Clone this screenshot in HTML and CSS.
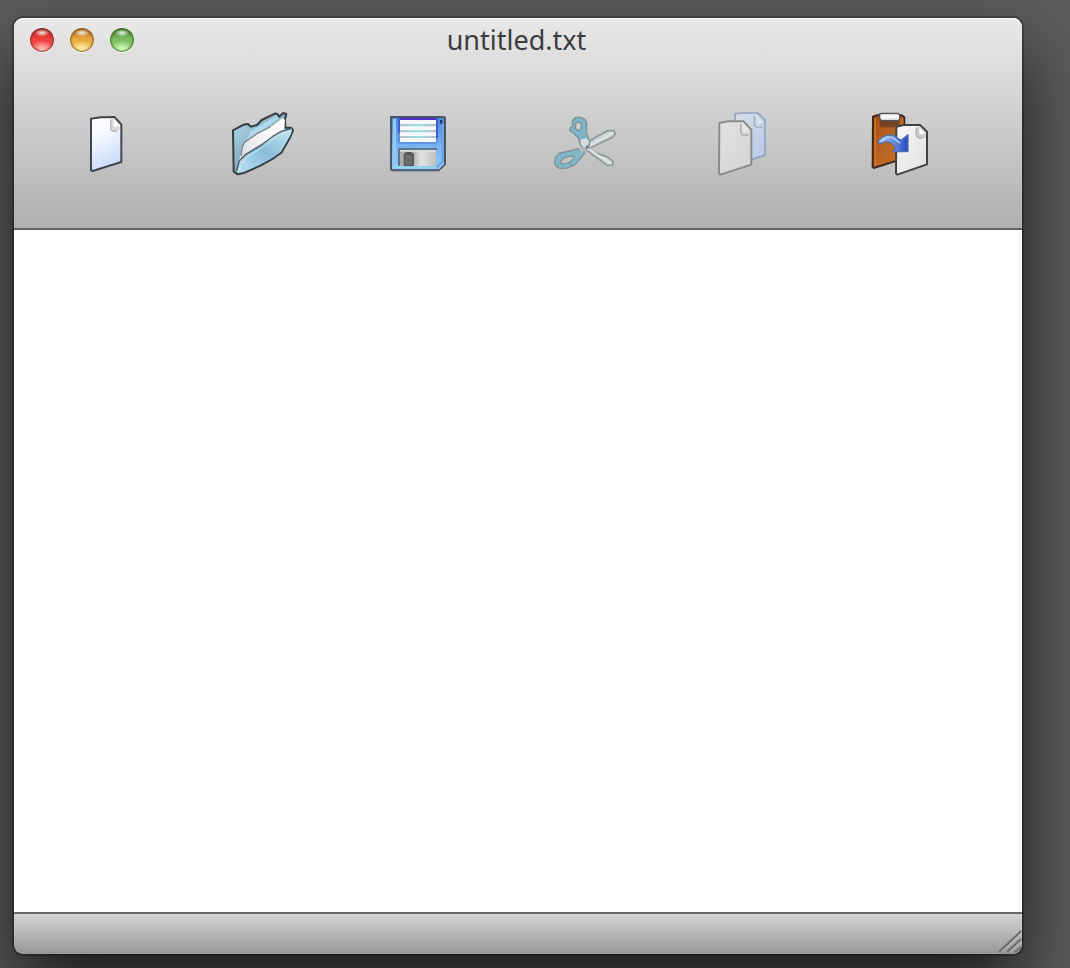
FILE: index.html
```html
<!DOCTYPE html>
<html lang="en">
<head>
<meta charset="utf-8">
<title>untitled.txt</title>
<link rel="stylesheet" href="styles.css">
</head>
<body>
<main class="window">
  <header class="window-head">
    <div class="titlebar">
      <div class="lights">
        <button class="light light-red" type="button" aria-label="Close"></button>
        <button class="light light-amber" type="button" aria-label="Minimize"></button>
        <button class="light light-green" type="button" aria-label="Zoom"></button>
      </div>
      <h1 class="title">untitled.txt</h1>
    </div>
    <nav class="toolbar" aria-label="Tools">
      <div class="group">
        <button class="tool" type="button" aria-label="New">
          <svg viewBox="-18 21 192 192">
            <defs><linearGradient id="page" x1="0" y1="0" x2="0.25" y2="1"><stop offset="0" stop-color="#fff"/><stop offset=".35" stop-color="#f7faff"/><stop offset="1" stop-color="#c9dcfb"/></linearGradient></defs>
            <path d="M33 41L62 37L103 36L124 58V171L38 198L33 196Z" fill="url(#page)" stroke="#42464c" stroke-width="6" stroke-linejoin="round"/>
            <path d="M91 40L101 39L118 58L119 77L96 77L91 73Z" fill="#dadada"/>
            <path d="M101 42L117 62L105 66L101 62Z" fill="#fff"/>
            <path d="M92 44V74L98 78H112" fill="none" stroke="#b5b8bd" stroke-width="4"/>
          </svg>
        </button>
        <button class="tool" type="button" aria-label="Open">
          <svg viewBox="24 30 192 192">
            <defs>
              <linearGradient id="back" x1="0" y1="0" x2="1" y2="1"><stop offset="0" stop-color="#b5e0f1"/><stop offset=".5" stop-color="#83aabd"/><stop offset="1" stop-color="#bcdbe8"/></linearGradient>
              <linearGradient id="front" x1="1" y1="0" x2="0" y2="1"><stop offset="0" stop-color="#c5e7f4"/><stop offset=".5" stop-color="#8abed8"/><stop offset="1" stop-color="#b9e2f2"/></linearGradient>
              <linearGradient id="sheet" x1="0" y1="1" x2="1" y2="0"><stop offset="0" stop-color="#d5d7dc"/><stop offset=".5" stop-color="#f3f3f4"/><stop offset="1" stop-color="#fff"/></linearGradient>
            </defs>
            <path d="M33 85L65 68L78 66L86 74L105 69L119 54L160 34L168 37L171 44L184 33L193 36L189 52L190 77L207 77L213 85L205 105L179 151L148 173L115 191L65 213L47 217L35 209Z" fill="url(#back)" stroke="#353d41" stroke-width="6" stroke-linejoin="round"/>
            <path d="M87 86L131 60L163 42L171 50L70 120Z" fill="#acd9eb"/>
            <path d="M52 174L60 135L70 119L103 94L146 75L183 47L189 54L186 88L71 160L53 189Z" fill="url(#sheet)"/>
            <path d="M57 162L61 134L70 119L105 95L145 75" fill="none" stroke="#7d858a" stroke-width="4"/>
            <path d="M72 161L119 133L152 109L176 91L210 80L207 96L188 129L177 149L151 168L112 189L66 209L46 213L49 191Z" fill="url(#front)"/>
            <path d="M44 207L51 178L70 158L119 128L151 104L178 88L208 80" fill="none" stroke="#4d5d65" stroke-width="4" stroke-linejoin="round"/>
            <path d="M48 207L61 185L74 165L121 137L151 114L176 97L205 85" fill="none" stroke="#c9eaf5" stroke-width="3"/>
          </svg>
        </button>
        <button class="tool" type="button" aria-label="Save">
          <svg viewBox="18 21 192 192">
            <defs>
              <linearGradient id="disk" x1="0" y1="0" x2="0" y2="1"><stop offset="0" stop-color="#4e87d7"/><stop offset=".55" stop-color="#77b4ef"/><stop offset="1" stop-color="#99c9f4"/></linearGradient>
              <linearGradient id="shutter"><stop offset="0" stop-color="#aaa"/><stop offset=".4" stop-color="#bbb"/><stop offset=".6" stop-color="#e3e3e3"/><stop offset="1" stop-color="#bebebe"/></linearGradient>
              <linearGradient id="stripe"><stop offset="0" stop-color="#b5bdcb"/><stop offset=".5" stop-color="#9ce4e7"/><stop offset="1" stop-color="#b5bdcb"/></linearGradient>
            </defs>
            <path d="M33 36H192L195 39V177L176 196H37L33 192Z" fill="url(#disk)" stroke="#4a5664" stroke-width="6" stroke-linejoin="round"/>
            <path d="M39 42V189H60V183H48V42Z" fill="#93c9f6"/>
            <path d="M185 56H192V174L174 191H168V183L185 170Z" fill="#68a4e5"/>
            <path d="M54 39H174V110L168 116H60L54 110Z" fill="#5a8fe0"/>
            <path d="M54 39H60V84H54ZM168 39H174V100H168Z" fill="#3c5fd0"/>
            <path d="M60 45H168V111H60Z" fill="#f6f7fb"/>
            <path d="M60 39H168V45H60Z" fill="#5129ce"/>
            <path d="M60 57H168V64H60ZM60 75H168V82H60ZM60 93H168V99H60Z" fill="url(#stripe)"/>
            <path d="M180 45H187V56H180Z" fill="#253c6d"/>
            <path d="M54 129H171V135H60V183H54Z" fill="#5d7590"/>
            <path d="M60 135H168V183H60Z" fill="url(#shutter)"/>
            <path d="M60 135H168V140H60Z" fill="#dedede"/>
            <path d="M71 147L78 141H94L102 147V183H71Z" fill="#585858"/>
            <path d="M75 150H97V180H75Z" fill="#6c6c6c"/>
            <path d="M42 187H170" stroke="#8cdde8" stroke-width="5"/>
            <path d="M174 192L192 174" stroke="#a9d2f4" stroke-width="4"/>
          </svg>
        </button>
      </div>
      <div class="group group-edit">
        <button class="tool" type="button" aria-label="Cut" disabled>
          <svg viewBox="27 21 192 192">
            <path d="M111 125L148 99L188 77L207 77L211 86L204 96L134 130L151 143L186 155L204 169L203 180L187 181L161 162L126 137Z" fill="#ced4d5" stroke="#929899" stroke-width="5" stroke-linejoin="round"/>
            <path d="M128 125L160 107L204 83M134 132L164 155L197 174" fill="none" stroke="#e2e6e6" stroke-width="5"/>
            <path fill-rule="evenodd" d="M82 48L91 38L106 37L120 44L125 56L124 84L132 103L133 122L119 131L106 118L100 98L85 84L75 77V69L83 65ZM92 55L91 71L102 78L109 71L110 58L102 51Z" fill="#7cb6c8" stroke="#84979d" stroke-width="5" stroke-linejoin="round"/>
            <path fill-rule="evenodd" d="M31 158L43 145L81 136L96 132L114 134L119 144L108 158L91 178L66 189L43 190L30 179ZM49 166L46 172L52 177L72 174L86 162L87 155L75 153L60 157Z" fill="#7cb8ca" stroke="#84979d" stroke-width="5" stroke-linejoin="round"/>
            <path d="M106 104L124 99L132 108L129 122L118 128L109 120Z" fill="#d5dcdd"/>
            <path d="M102 134L112 125L124 129L120 139L110 144Z" fill="#aabdc3"/>
            <circle cx="127" cy="126" r="5" fill="#73797a"/>
          </svg>
        </button>
        <button class="tool" type="button" aria-label="Copy" disabled>
          <svg viewBox="9 30 192 192">
            <defs>
              <linearGradient id="rear" x1="0" y1="0" x2="1" y2="1"><stop offset="0" stop-color="#d9dee7"/><stop offset="1" stop-color="#b4c9e9"/></linearGradient>
              <linearGradient id="fore" x1="0" y1="0" x2="1" y2="1"><stop offset="0" stop-color="#e3e3e3"/><stop offset="1" stop-color="#d2d2d2"/></linearGradient>
            </defs>
            <path d="M81 36L98 33H150L171 54V160L81 188Z" fill="url(#rear)" stroke="#8fa2c0" stroke-width="5" stroke-linejoin="round"/>
            <path d="M139 42V70L146 76H164" fill="none" stroke="#a3b0c2" stroke-width="4"/>
            <path d="M146 43L164 61L152 65Z" fill="#e6eaf0"/>
            <path d="M34 63L61 58H107L130 83V188L37 218L33 215Z" fill="url(#fore)" stroke="#8b8b8b" stroke-width="6" stroke-linejoin="round"/>
            <path d="M98 66V93L104 99H122" fill="none" stroke="#adadad" stroke-width="4"/>
            <path d="M105 68L123 86L112 91L105 86Z" fill="#e8e8e8"/>
          </svg>
        </button>
        <button class="tool" type="button" aria-label="Paste">
          <svg viewBox="18 30 192 192">
            <defs>
              <linearGradient id="board" x1="0" y1="0" x2="1" y2="1"><stop offset="0" stop-color="#a64c10"/><stop offset=".5" stop-color="#b76527"/><stop offset="1" stop-color="#d46e13"/></linearGradient>
              <linearGradient id="clip" x1="0" y1="0" x2="0" y2="1"><stop offset="0" stop-color="#b4b4b4"/><stop offset=".35" stop-color="#fff"/><stop offset="1" stop-color="#d4d4d4"/></linearGradient>
              <linearGradient id="paper" x1="0" y1="0" x2="1" y2="1"><stop offset="0" stop-color="#fafafa"/><stop offset="1" stop-color="#dedede"/></linearGradient>
              <linearGradient id="arrow"><stop offset="0" stop-color="#b7d0f2"/><stop offset=".45" stop-color="#739be5"/><stop offset="1" stop-color="#2347bd"/></linearGradient>
            </defs>
            <path d="M33 44L43 40H119L127 46V169L35 198L32 194Z" fill="url(#board)" stroke="#3b2820" stroke-width="6" stroke-linejoin="round"/>
            <path d="M37 48V193L42 191V50ZM120 47V75H124V47Z" fill="#df7015"/>
            <path d="M52 55H113V67L97 76H56Z" fill="#603a25" opacity=".75"/>
            <path d="M53 36L59 34H108L113 38V52L108 56H59L53 51Z" fill="url(#clip)" stroke="#555" stroke-width="4" stroke-linejoin="round"/>
            <path d="M103 74L125 69H174L195 89V187L106 218L102 214Z" fill="url(#paper)" stroke="#424242" stroke-width="6" stroke-linejoin="round"/>
            <path d="M163 75H173L191 93V108H169L163 102Z" fill="#ccc"/>
            <path d="M172 77L188 93L180 98L172 94Z" fill="#fff"/>
            <path d="M163 78V101L170 108H181" fill="none" stroke="#b3b3b3" stroke-width="4"/>
            <path d="M49 116L62 105L78 99L96 101L117 115L138 98V149H92L101 139L91 124L75 118L60 123L50 124Z" fill="url(#arrow)" stroke="#5271ae" stroke-width="4" stroke-linejoin="round"/>
            <path d="M57 116L76 105L93 107L114 124" fill="none" stroke="#bbd3f5" stroke-width="4"/>
          </svg>
        </button>
      </div>
    </nav>
  </header>
  <textarea class="editor" aria-label="Document text" spellcheck="false"></textarea>
  <footer class="statusbar">
    <svg class="grip" viewBox="0 0 24 24" aria-hidden="true"><path d="M1 22L23 1M9 22L23 9M17 22L23 17" stroke="#6d6d6d" stroke-width="2"/><path d="M4 22L23 4M12 22L23 12" stroke="#bdbdbd" stroke-width="1"/></svg>
  </footer>
</main>
</body>
</html>
```
FILE: styles.css
```css
* {
  box-sizing: border-box;
}

body {
  margin: 0;
  height: 100vh;
  padding: 18px 48px 14px 14px;
  background: #5b5b5b;
  font-family: "Noto Sans", "Open Sans", sans-serif;
  display: flex;
  overflow: hidden;
}

button {
  border: 0;
  padding: 0;
  background: none;
}

.window {
  flex: 1;
  display: flex;
  flex-direction: column;
  border-radius: 9px;
  box-shadow: 0 0 0 2px rgba(0, 0, 0, 0.25), 0 36px 72px rgba(0, 0, 0, 0.7);
}

.window-head {
  border-radius: 9px 9px 0 0;
  border-bottom: 2px solid #636363;
  background: linear-gradient(#e9e9e9, #d0d0d0 45%, #b0b0b0);
  box-shadow: inset 0 1px 0 rgba(255, 255, 255, 0.7);
}

.titlebar {
  display: grid;
  grid-template-columns: 1fr auto 1fr;
  align-items: center;
  height: 44px;
  padding: 0 19px 0 16px;
}

.lights {
  display: flex;
  gap: 16px;
}

.light {
  width: 24px;
  height: 24px;
  border-radius: 50%;
}

.light-red {
  background:
    radial-gradient(ellipse 8px 4px at 50% 20%, rgba(255, 255, 255, 0.9), transparent),
    radial-gradient(ellipse 12px 9px at 50% 90%, #ffc9c3, transparent),
    linear-gradient(#8f1814, #ee3a3a 40%, #ff6560);
  box-shadow: inset 0 0 2px 1px #8a2d2b, 0 1px 0 #f5f5f5;
}

.light-amber {
  background:
    radial-gradient(ellipse 8px 4px at 50% 20%, rgba(255, 255, 255, 0.9), transparent),
    radial-gradient(ellipse 12px 9px at 50% 90%, #fff6b8, transparent),
    linear-gradient(#8b4b09, #e6a23a 40%, #f8c85f);
  box-shadow: inset 0 0 2px 1px #8a5b20, 0 1px 0 #f5f5f5;
}

.light-green {
  background:
    radial-gradient(ellipse 8px 4px at 50% 20%, rgba(255, 255, 255, 0.9), transparent),
    radial-gradient(ellipse 12px 9px at 50% 90%, #e0ffc4, transparent),
    linear-gradient(#28600f, #75b859 40%, #98d878);
  box-shadow: inset 0 0 2px 1px #3f6e2b, 0 1px 0 #f5f5f5;
}

.title {
  margin: 0;
  color: #3d3d3d;
  font-size: 27px;
  font-weight: 400;
  line-height: 44px;
}

.toolbar {
  display: flex;
  justify-content: space-between;
  padding: 50px 90px 52px 60px;
}

.group {
  display: flex;
  gap: 92px;
}

.group-edit {
  gap: 93px;
}

.tool {
  width: 64px;
  height: 64px;
}

.tool svg {
  display: block;
  width: 100%;
  height: 100%;
  overflow: visible;
}

.editor {
  flex: 1;
  display: block;
  width: 100%;
  border: 0;
  padding: 8px;
  background: #fff;
  font: inherit;
  font-size: 27px;
  resize: none;
  outline: 0;
}

.statusbar {
  display: flex;
  justify-content: flex-end;
  align-items: flex-end;
  height: 42px;
  border-top: 2px solid #696969;
  border-radius: 0 0 9px 9px;
  background: linear-gradient(#d5d5d5, #979797);
  overflow: hidden;
}

.grip {
  width: 24px;
  height: 24px;
}
```
